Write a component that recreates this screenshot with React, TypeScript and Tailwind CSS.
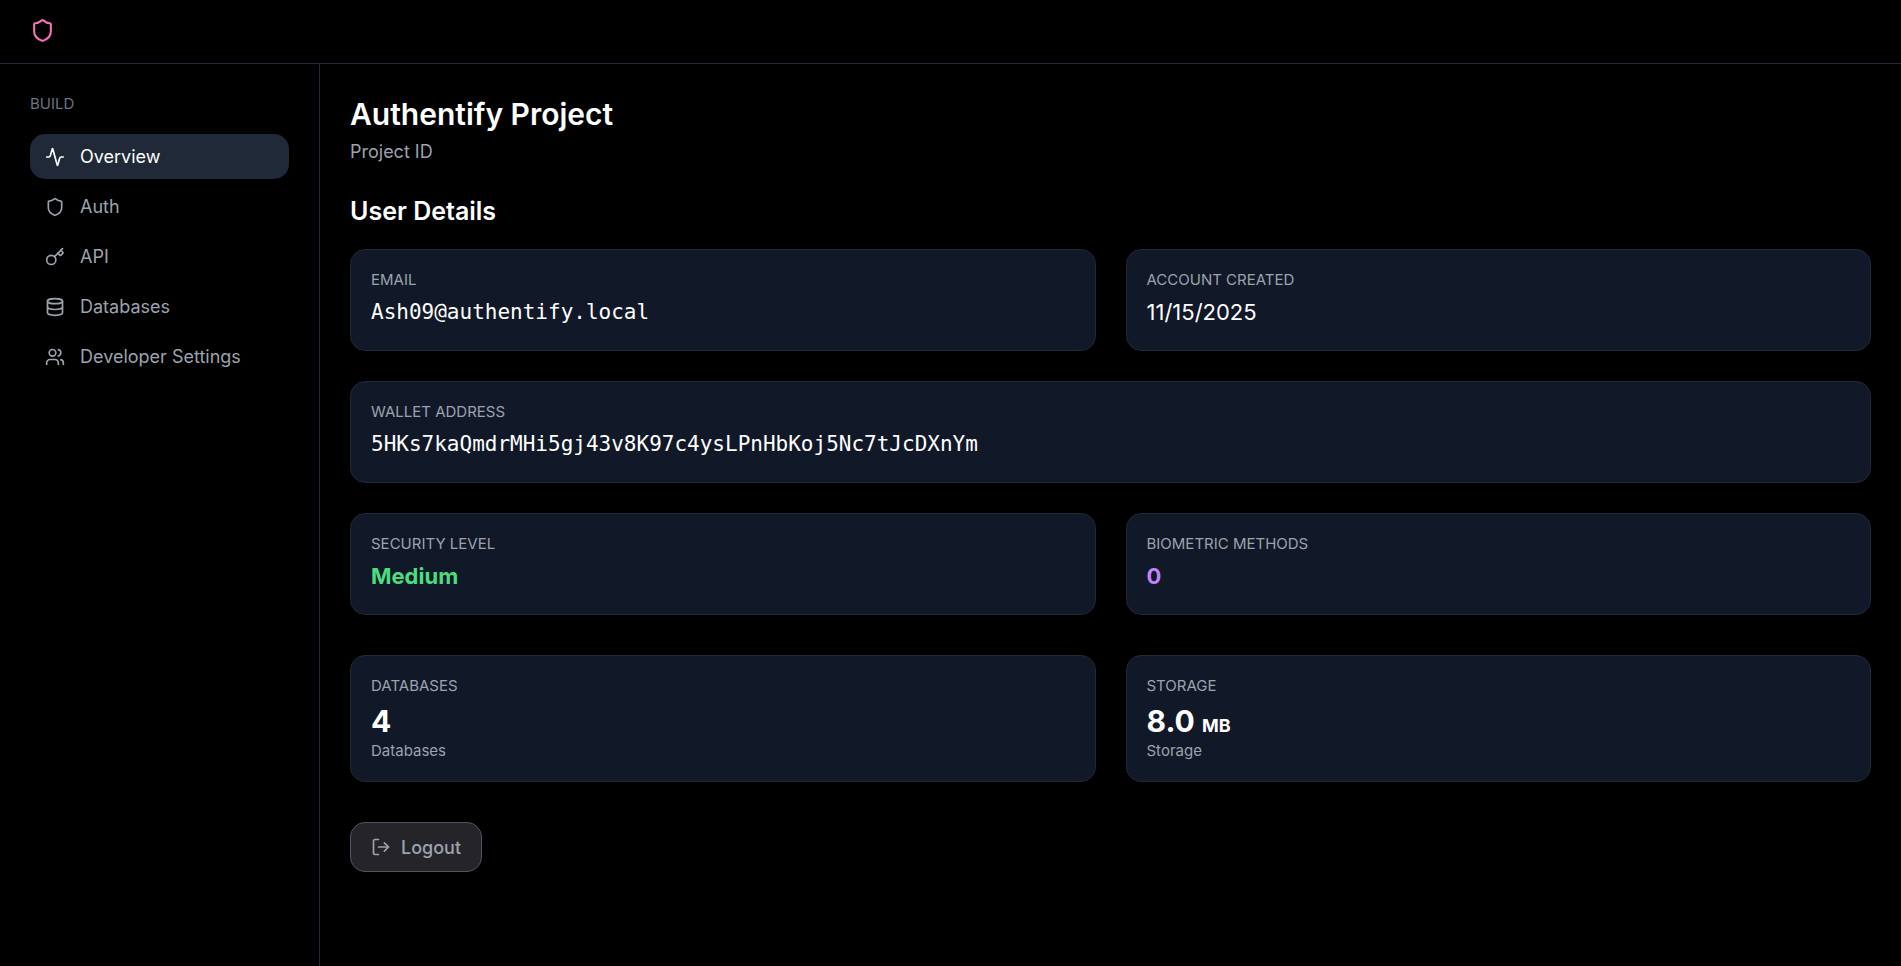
import type { ReactNode } from 'react';
import { Activity, Database, Key, LogOut, Shield, Users } from 'lucide-react';

const navItems = [
  { label: 'Overview', icon: Activity, active: true },
  { label: 'Auth', icon: Shield, active: false },
  { label: 'API', icon: Key, active: false },
  { label: 'Databases', icon: Database, active: false },
  { label: 'Developer Settings', icon: Users, active: false },
];

export default function App() {
  return (
    <div className="min-h-screen flex flex-col bg-black text-white font-['Inter',sans-serif]">
      {/* Header */}
      <header className="flex px-[30px] pt-[18px] pb-5 border-b border-[#1f2937]">
        <a href="#" aria-label="Home">
          <Shield className="w-[25px] h-[25px] text-[#f472b6]" />
        </a>
      </header>

      <div className="flex flex-1">
        {/* Sidebar */}
        <aside className="w-80 shrink-0 p-[30px] border-r border-[#1f2937]">
          <p className="mb-5 text-[15px] leading-5 uppercase text-[#6b7280]">Build</p>
          <nav className="flex flex-col gap-[5px]">
            {navItems.map((item) => {
              const Icon = item.icon;
              return (
                <a
                  key={item.label}
                  href="#"
                  className={`flex items-center gap-[15px] px-[15px] py-[10px] rounded-[15px] text-[18px] leading-[25px] ${
                    item.active
                      ? 'bg-[#1f2937] text-white'
                      : 'text-[#9ca3af] hover:bg-[#111827]'
                  }`}
                >
                  <Icon className="w-5 h-5" />
                  {item.label}
                </a>
              );
            })}
          </nav>
        </aside>

        <main className="flex-1 min-w-0 p-[30px]">
          <h1 className="text-[30px] leading-10 font-semibold">Authentify Project</h1>
          <p className="mt-[5px] mb-[30px] text-[18px] leading-[25px] text-[#9ca3af]">Project ID</p>

          {/* User details */}
          <h2 className="mb-5 text-[25px] leading-[35px] font-semibold">User Details</h2>
          <div className="grid grid-cols-2 gap-[30px] mb-10">
            <Card label="Email">
              <MonoValue>Ash09@authentify.local</MonoValue>
            </Card>
            <Card label="Account Created">
              <p className="text-[22px] leading-[35px]">11/15/2025</p>
            </Card>
            <Card label="Wallet Address" wide>
              <MonoValue>5HKs7kaQmdrMHi5gj43v8K97c4ysLPnHbKoj5Nc7tJcDXnYm</MonoValue>
            </Card>
            <Card label="Security Level">
              <p className="text-[22px] leading-[35px] font-bold text-[#4ade80]">Medium</p>
            </Card>
            <Card label="Biometric Methods">
              <p className="text-[22px] leading-[35px] font-bold text-[#c084fc]">0</p>
            </Card>
          </div>

          {/* Usage */}
          <div className="grid grid-cols-2 gap-[30px] mb-10">
            <Card label="Databases">
              <p className="text-[30px] leading-10 font-bold">4</p>
              <p className="text-[15px] leading-5 text-[#9ca3af]">Databases</p>
            </Card>
            <Card label="Storage">
              <p className="text-[30px] leading-10 font-bold">
                8.0 <span className="text-[18px] leading-none">MB</span>
              </p>
              <p className="text-[15px] leading-5 text-[#9ca3af]">Storage</p>
            </Card>
          </div>

          <button
            type="button"
            className="flex items-center gap-[10px] h-[50px] px-5 rounded-[15px] border border-[#4b5563] bg-[#252428] text-[18px] leading-[25px] font-medium text-[#9ca3af]"
          >
            <LogOut className="w-5 h-5" />
            Logout
          </button>
        </main>
      </div>
    </div>
  );
}

function Card({ label, wide, children }: { label: string; wide?: boolean; children: ReactNode }) {
  return (
    <div
      className={`p-5 rounded-[15px] border border-[#1f2937] bg-[#111827] ${
        wide ? 'col-span-2' : ''
      }`}
    >
      <p className="mb-[5px] text-[15px] leading-5 uppercase text-[#9ca3af]">{label}</p>
      {children}
    </div>
  );
}

function MonoValue({ children }: { children: ReactNode }) {
  return (
    <p className="text-[21px] leading-[35px] break-all font-['DejaVu_Sans_Mono',monospace]">
      {children}
    </p>
  );
}
